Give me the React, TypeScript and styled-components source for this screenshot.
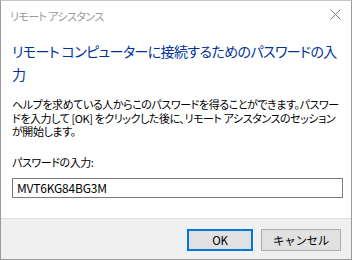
import { FC } from "react"
import styled, { createGlobalStyle } from "styled-components"

const GlobalStyle = createGlobalStyle`
  html, body {
    margin: 0;
    padding: 0;
    background: #ffffff;
  }
  body {
    font-family: "Noto Sans CJK JP", "Noto Sans", sans-serif;
    font-feature-settings: "palt" 1;
    font-kerning: normal;
  }
`

const Window = styled.div`
  box-sizing: border-box;
  width: 352px;
  height: 260px;
  border: 1px solid #9a9a9a;
  border-top-color: #c4c4c4;
  background: #ffffff;
  display: flex;
  flex-direction: column;
`

const TitleBar = styled.div`
  height: 29px;
  display: flex;
  align-items: center;
  justify-content: space-between;
  padding: 0 10px 2px 9px;
`

const Title = styled.span`
  font-size: 11px;
  letter-spacing: -0.6px;
  color: #999999;
`

const CloseButton = styled.button`
  border: none;
  background: transparent;
  padding: 0;
  width: 12px;
  height: 12px;
  display: flex;
  align-items: center;
  justify-content: center;
  margin-top: -2px;
`

const Content = styled.div`
  flex: 1;
  padding: 0 10px 0 11px;
  display: flex;
  flex-direction: column;
`

const Heading = styled.h1`
  margin: 8px 0 0;
  font-weight: 400;
  font-size: 14px;
  letter-spacing: -0.6px;
  line-height: 23px;
  color: #003399;
  white-space: nowrap;
`

const Description = styled.p`
  margin: 12px 0 0;
  font-size: 11px;
  letter-spacing: -0.42px;
  line-height: 13.5px;
  color: #000000;
  white-space: nowrap;
`

const FieldLabel = styled.label`
  margin-top: 16px;
  font-size: 11px;
  letter-spacing: -0.42px;
  line-height: 14px;
  color: #000000;
`

const PasswordInput = styled.input`
  box-sizing: border-box;
  margin-top: 9px;
  width: 331px;
  height: 20px;
  border: 1px solid #7a7a7a;
  padding: 0 4px;
  font-family: inherit;
  font-size: 12px;
  letter-spacing: -0.2px;
  color: #000000;
  outline: none;
`

const Footer = styled.div`
  height: 41px;
  box-sizing: border-box;
  border-top: 1px solid #dfdfdf;
  background: #f0f0f0;
  display: flex;
  justify-content: flex-end;
  align-items: flex-start;
  gap: 8px;
  padding: 10px 10px 0 0;
`

const DialogButton = styled.button<{ primary?: boolean }>`
  box-sizing: border-box;
  height: 22px;
  width: ${({ primary }) => (primary ? "66px" : "80px")};
  background: #e1e1e1;
  border: ${({ primary }) =>
    primary ? "2px solid #0078d7" : "1px solid #adadad"};
  font-family: inherit;
  font-size: 11.5px;
  letter-spacing: -0.3px;
  color: #000000;
  padding: 0;
`

const App: FC = () => (
  <>
    <GlobalStyle />
    <Window>
      <TitleBar>
        <Title>リモート アシスタンス</Title>
        <CloseButton aria-label="閉じる">
          <svg width="11" height="11" viewBox="0 0 11 11">
            <path d="M0.5 0.5 L10.5 10.5 M10.5 0.5 L0.5 10.5" stroke="#7a7a7a" strokeWidth="1" fill="none" />
          </svg>
        </CloseButton>
      </TitleBar>
      <Content>
        <Heading>
          リモート コンピューターに接続するためのパスワードの入
          <br />力
        </Heading>
        <Description>
          ヘルプを求めている人からこのパスワードを得ることができます。パスワー
          <br />
          ドを入力して [OK] をクリックした後に、リモート アシスタンスのセッション
          <br />
          が開始します。
        </Description>
        <FieldLabel htmlFor="pw">パスワードの入力:</FieldLabel>
        <PasswordInput id="pw" defaultValue="MVT6KG84BG3M" />
      </Content>
      <Footer>
        <DialogButton primary>OK</DialogButton>
        <DialogButton>キャンセル</DialogButton>
      </Footer>
    </Window>
  </>
)

export default App
